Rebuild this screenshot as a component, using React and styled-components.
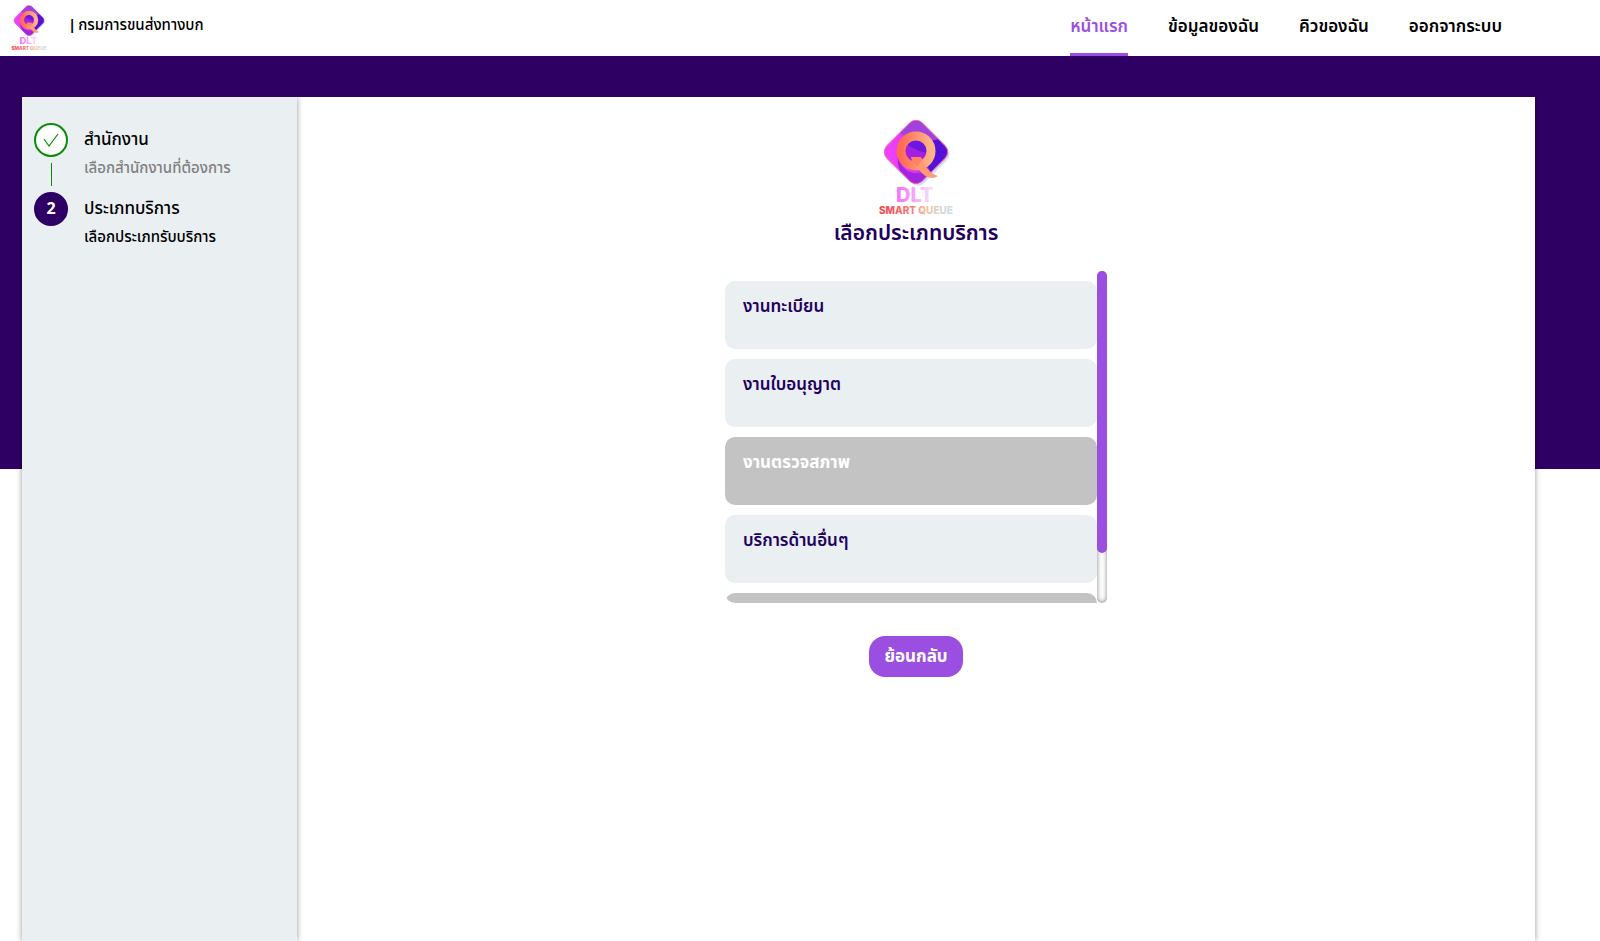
import { useId, useState } from "react";
import styled, { createGlobalStyle, css } from "styled-components";

const GlobalStyle = createGlobalStyle`
  * {
    box-sizing: border-box;
  }

  body {
    margin: 0;
    background-color: #ffffff;
    color: #000000;
    font-family: "Noto Sans Thai", "Noto Sans", sans-serif;
    font-size: 16px;
  }
`;

const services = [
  { name: "งานทะเบียน" },
  { name: "งานใบอนุญาต" },
  { name: "งานตรวจสภาพ", closed: true },
  { name: "บริการด้านอื่นๆ" },
  { name: "", closed: true },
];

const THUMB_SIZE = 85;

const LogoMark = ({ className }) => {
  const id = useId();

  return (
    <svg className={className} viewBox="0 0 80 98" role="img" aria-label="DLT Smart Queue">
      <defs>
        <linearGradient id={`${id}tile`} x1="0" y1="0.6" x2="1" y2="0.4">
          <stop offset="0" stopColor="#f545ff" />
          <stop offset="0.35" stopColor="#e83cf8" />
          <stop offset="0.6" stopColor="#b02be8" />
          <stop offset="1" stopColor="#6a1be0" />
        </linearGradient>
        <linearGradient id={`${id}ring`} x1="0" y1="0" x2="1" y2="0">
          <stop offset="0" stopColor="#ff6a55" />
          <stop offset="1" stopColor="#ffb488" />
        </linearGradient>
        <linearGradient id={`${id}dlt`} x1="0" y1="0" x2="1" y2="0">
          <stop offset="0" stopColor="#f56cfb" />
          <stop offset="1" stopColor="#f8e4fa" />
        </linearGradient>
        <linearGradient id={`${id}name`} x1="0" y1="0" x2="1" y2="0">
          <stop offset="0" stopColor="#f8404c" />
          <stop offset="0.45" stopColor="#f37f7c" />
          <stop offset="0.65" stopColor="#f2c4a0" />
          <stop offset="1" stopColor="#c5e2f2" />
        </linearGradient>
        <clipPath id={`${id}clip`}>
          <rect x="15" y="8" width="50" height="50" rx="9" transform="rotate(45 40 33)" />
        </clipPath>
      </defs>
      <rect x="17" y="10" width="50" height="50" rx="9" transform="rotate(45 42 35)" fill="#cfe0f5" />
      <g clipPath={`url(#${id}clip)`}>
        <rect width="80" height="70" fill={`url(#${id}tile)`} />
        <path d="M24 14C34 -4 58 2 66 16L60 22C48 24 34 20 24 14Z" fill="#a042dc" />
        <path d="M46 20C56 24 66 20 72 14L80 30V44C68 48 60 50 54 56Z" fill="#5412d8" />
        <path d="M22 36C24 52 38 58 52 52L44 72C28 66 20 50 22 36Z" fill="#a324de" />
        <circle cx="40" cy="32" r="12" fill="#a51fe0" />
        <path d="M30 20H54V34C46 34 38 30 30 25Z" fill="#6a18e0" />
      </g>
      <rect x="15" y="8" width="50" height="50" rx="9" transform="rotate(45 40 33)" fill="none" stroke="#ec6aa8" />
      <circle cx="40" cy="32" r="15" fill="none" stroke={`url(#${id}ring)`} strokeWidth="9" />
      <path d="M35 38H45C46 43 49 48 53 51C55 54 58 56 62 57C56 61 49 58 44 52C40 49 37 44 35 38Z" fill="#ff9a74" />
      <path d="M35 38H45L46 41L41 48C38 45 36 42 35 38Z" fill="#ff8362" />
      <text x="20" y="83" fontFamily="Inter, sans-serif" fontSize="20" fontWeight="800" fill={`url(#${id}dlt)`}>
        DLT
      </text>
      <text x="3" y="95" fontFamily="Inter, sans-serif" fontSize="10" fontWeight="800" fill={`url(#${id}name)`}>
        SMART QUEUE
      </text>
    </svg>
  );
};

const ServiceList = () => {
  const [progress, setProgress] = useState(0);

  const handleScroll = (event) => {
    const { scrollTop, scrollHeight, clientHeight } = event.currentTarget;
    setProgress(scrollTop / (scrollHeight - clientHeight || 1));
  };

  return (
    <ListFrame>
      <ListScroll onScroll={handleScroll}>
        {services.map((service, index) => (
          <ServiceButton key={index} type="button" disabled={service.closed}>
            {service.name}
          </ServiceButton>
        ))}
      </ListScroll>
      <ScrollTrack>
        <ScrollThumb style={{ marginTop: `${progress * (100 - THUMB_SIZE) * 3.32}px` }} />
      </ScrollTrack>
    </ListFrame>
  );
};

const App = () => {
  return (
    <>
      <GlobalStyle />
      <Header>
        <Brand href="/">
          <HeaderLogo />
          <BrandName>
            <b>|</b>
            <span>กรมการขนส่งทางบก</span>
          </BrandName>
        </Brand>
        <Nav>
          <NavLink href="/" $active>
            หน้าแรก
          </NavLink>
          <NavLink href="/profile">ข้อมูลของฉัน</NavLink>
          <NavLink href="/queue">คิวของฉัน</NavLink>
          <NavLink href="/logout">ออกจากระบบ</NavLink>
        </Nav>
      </Header>
      <Page>
        <Panel>
          <Sidebar>
            <Steps>
              <Step>
                <StepBadge $done>
                  <svg width="18" height="18" viewBox="0 0 18 18" fill="none" stroke="#0a8a0a" strokeWidth="1.2">
                    <path d="M2 8L7 15L16 3" />
                  </svg>
                </StepBadge>
                <StepTitle>สำนักงาน</StepTitle>
                <StepLine />
                <StepHint $done>เลือกสำนักงานที่ต้องการ</StepHint>
              </Step>
              <Step>
                <StepBadge>2</StepBadge>
                <StepTitle>ประเภทบริการ</StepTitle>
                <span />
                <StepHint>เลือกประเภทรับบริการ</StepHint>
              </Step>
            </Steps>
          </Sidebar>
          <Content>
            <ContentLogo />
            <Title>เลือกประเภทบริการ</Title>
            <ServiceList />
            <BackButton type="button">ย้อนกลับ</BackButton>
          </Content>
        </Panel>
      </Page>
    </>
  );
};

//Styled-Components

const Header = styled.header`
  display: flex;
  align-items: center;
  justify-content: space-between;
  height: 56px;
  padding: 0 98px 0 10px;
  background-color: #ffffff;
`;

const Brand = styled.a`
  display: flex;
  align-items: center;
  gap: 20px;
  color: #000000;
  font-size: 15px;
  font-weight: 500;
  line-height: 24px;
  text-decoration: none;
`;

const BrandName = styled.span`
  display: flex;
  gap: 2px;
  padding-bottom: 4px;
`;

const HeaderLogo = styled(LogoMark)`
  width: 38px;
  height: 48px;
`;

const Nav = styled.nav`
  display: flex;
  gap: 40px;
  height: 100%;
`;

const NavLink = styled.a`
  display: flex;
  align-items: center;
  border-bottom: 3px solid transparent;
  color: #000000;
  font-size: 17px;
  font-weight: 600;
  text-decoration: none;

  ${({ $active }) =>
    $active &&
    css`
      border-color: #9b4fe0;
      color: #9b4fe0;
    `}
`;

const Page = styled.main`
  padding: 41px 65px 0 22px;
  background: linear-gradient(#2f0064 413px, #ffffff 413px);
`;

const Panel = styled.div`
  display: flex;
  min-height: calc(100vh - 97px);
  background-color: #ffffff;
  box-shadow: 0 0 6px rgba(0, 0, 0, 0.4);
  clip-path: inset(0 -10px 0 -10px);
`;

const Sidebar = styled.aside`
  flex: 0 0 275px;
  padding: 26px 12px;
  background-color: #eaeff2;
  box-shadow: 0 0 6px rgba(0, 0, 0, 0.4);
  clip-path: inset(0 -10px 0 0);
`;

const Steps = styled.ol`
  margin: 0;
  padding: 0;
  list-style: none;
`;

const Step = styled.li`
  display: grid;
  grid-template-columns: 34px 1fr;
  grid-template-rows: 34px 35px;
  column-gap: 16px;
  align-items: center;
`;

const StepBadge = styled.span`
  display: flex;
  align-items: center;
  justify-content: center;
  width: 34px;
  height: 34px;
  border: 2px solid ${({ $done }) => ($done ? "#0a8a0a" : "#2f0064")};
  border-radius: 50%;
  background-color: ${({ $done }) => ($done ? "#ffffff" : "#2f0064")};
  color: #ffffff;
  font-weight: 700;
`;

const StepLine = styled.span`
  justify-self: center;
  width: 1px;
  height: 23px;
  background-color: #0a8a0a;
`;

const StepTitle = styled.span`
  font-size: 17px;
  font-weight: 500;
`;

const StepHint = styled.span`
  align-self: start;
  color: ${({ $done }) => ($done ? "#808080" : "#000000")};
  font-size: 15px;
  font-weight: 500;
`;

const Content = styled.section`
  display: flex;
  flex: 1;
  flex-direction: column;
  align-items: center;
  padding-top: 22px;
`;

const ContentLogo = styled(LogoMark)`
  width: 80px;
  height: 98px;
`;

const Title = styled.h1`
  margin: 0;
  color: #210060;
  font-size: 21px;
  font-weight: 600;
  line-height: 34px;
`;

const ListFrame = styled.div`
  display: flex;
  width: 382px;
  height: 332px;
  margin-top: 20px;
`;

const ListScroll = styled.div`
  flex: 1;
  overflow-y: auto;
  border-radius: 10px 0 0 10px;
  scrollbar-width: none;
`;

const ScrollTrack = styled.div`
  width: 10px;
  border-radius: 10px;
  box-shadow: inset 0 0 5px grey;
`;

const ScrollThumb = styled.div`
  height: ${THUMB_SIZE}%;
  border-radius: 10px;
  background-color: #9b4fe0;
`;

const ServiceButton = styled.button`
  display: flex;
  width: 100%;
  height: 68px;
  margin-top: 10px;
  padding: 13px 18px;
  border: none;
  border-radius: 10px;
  background-color: #eaeff2;
  color: #210060;
  font-family: inherit;
  font-size: 17px;
  font-weight: 600;
  cursor: pointer;

  &:disabled {
    background-color: #c3c3c3;
    color: #ffffff;
    font-weight: 700;
    cursor: default;
  }
`;

const BackButton = styled.button`
  height: 41px;
  margin-top: 33px;
  padding: 0 15px;
  border: none;
  border-radius: 16px;
  background-color: #9b4fe0;
  color: #ffffff;
  font-family: inherit;
  font-size: 17px;
  font-weight: 700;
  cursor: pointer;
`;

export default App;
